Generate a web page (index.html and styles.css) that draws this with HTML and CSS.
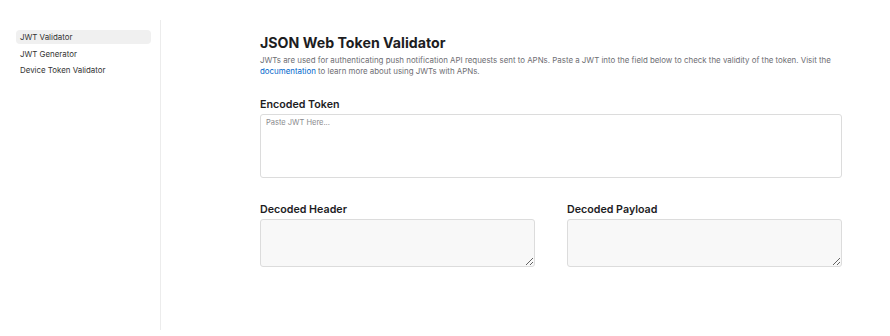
FILE: index.html
```html
<!DOCTYPE html>
<html lang="en">
<head>
    <meta charset="UTF-8">
    <title>JSON Web Token Validator</title>
    <link rel="stylesheet" href="styles.css">
</head>
<body>
    <nav class="sidebar">
        <a class="nav-item active" href="#">JWT Validator</a>
        <a class="nav-item" href="#">JWT Generator</a>
        <a class="nav-item" href="#">Device Token Validator</a>
    </nav>

    <main class="content">
        <h1>JSON Web Token Validator</h1>
        <p class="intro">JWTs are used for authenticating push notification API requests sent to APNs. Paste a JWT into the field below to check the validity of the token. Visit the <a href="#">documentation</a> to learn more about using JWTs with APNs.</p>

        <label class="field-label" for="token">Encoded Token</label>
        <textarea id="token" class="token-input" placeholder="Paste JWT Here..."></textarea>

        <div class="decoded">
            <div class="decoded-col">
                <label class="field-label" for="header">Decoded Header</label>
                <textarea id="header" class="decoded-output" readonly></textarea>
            </div>
            <div class="decoded-col">
                <label class="field-label" for="payload">Decoded Payload</label>
                <textarea id="payload" class="decoded-output" readonly></textarea>
            </div>
        </div>
    </main>
</body>
</html>
```

FILE: styles.css
```css
body {
    display: flex;
    margin: 0;
    height: 336px;
    overflow: hidden;
    background-color: #fff;
    color: #1d1d1f;
    font-family: Inter, "Liberation Sans", sans-serif;
}
.sidebar {
    width: 161px;
    box-sizing: border-box;
    padding: 10px 9px 0 16px;
    margin: 20px 0 6px;
    border-right: 1px solid #ececec;
    display: flex;
    flex-direction: column;
    gap: 2.5px;
}
.nav-item {
    display: block;
    padding: 0 4px;
    height: 14px;
    line-height: 14px;
    font-size: 7.9px;
    color: #333;
    text-decoration: none;
    border-radius: 4px;
}
.nav-item.active {
    background-color: #f0f0f0;
}
.content {
    flex: 1;
    padding: 33px 48px 0 99px;
    display: flex;
    flex-direction: column;
}
h1 {
    margin: 0;
    font-size: 14.2px;
    font-weight: 700;
    line-height: 20px;
    color: #1d1d1f;
}
.intro {
    margin: 2px 0 0;
    font-size: 7.9px;
    line-height: 11px;
    color: #6e6e73;
}
.intro a {
    color: #0066cc;
    text-decoration: none;
}
.field-label {
    display: block;
    font-size: 10.7px;
    font-weight: 600;
    line-height: 14px;
    color: #1d1d1f;
    margin-bottom: 2px;
}
.content > .field-label {
    margin-top: 21px;
}
textarea {
    display: block;
    box-sizing: border-box;
    width: 100%;
    margin: 0;
    border: 1px solid #dcdcdc;
    border-radius: 3px;
    padding: 3px 5px;
    font-family: Inter, "Liberation Sans", sans-serif;
    font-size: 7.5px;
    color: #1d1d1f;
}
textarea::placeholder {
    color: #8a8a8e;
}
.token-input {
    height: 64px;
    resize: none;
    background-color: #fff;
}
.decoded {
    display: flex;
    gap: 32px;
    margin-top: 25px;
}
.decoded-col {
    flex: 1;
}
.decoded-output {
    height: 48px;
    background-color: #f8f8f8;
}
```
